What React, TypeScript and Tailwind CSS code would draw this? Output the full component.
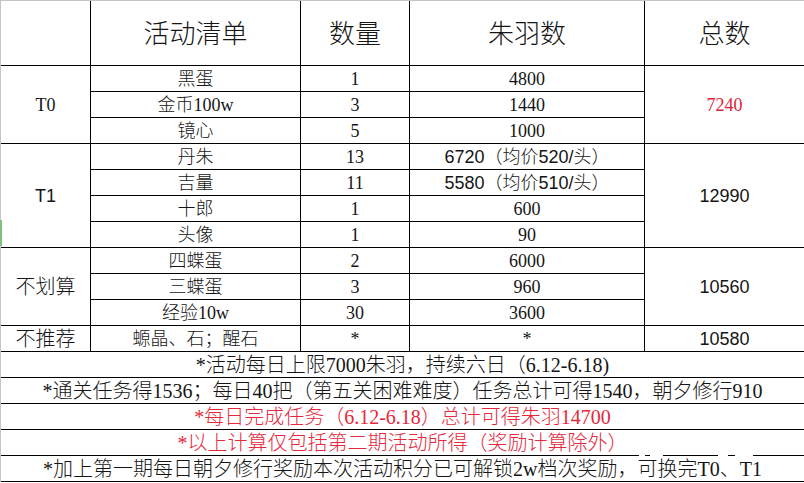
import React from "react";

const serif = "font-['Liberation_Serif','Noto_Sans_CJK_SC',serif]";
const sans = "font-['Liberation_Sans','Noto_Sans_CJK_SC',sans-serif]";

type Row = { name: string; qty: string; amount: string; amountSans?: boolean };

const groups: { label: string; labelSans?: boolean; labelSize: string; total: string; totalRed?: boolean; totalSans?: boolean; rows: Row[] }[] = [
  {
    label: "T0",
    labelSize: "text-[18px]",
    total: "7240",
    totalRed: true,
    rows: [
      { name: "黑蛋", qty: "1", amount: "4800" },
      { name: "金币100w", qty: "3", amount: "1440" },
      { name: "镜心", qty: "5", amount: "1000" },
    ],
  },
  {
    label: "T1",
    labelSans: true,
    labelSize: "text-[18px]",
    total: "12990",
    totalSans: true,
    rows: [
      { name: "丹朱", qty: "13", amount: "6720（均价520/头）", amountSans: true },
      { name: "吉量", qty: "11", amount: "5580（均价510/头）", amountSans: true },
      { name: "十郎", qty: "1", amount: "600" },
      { name: "头像", qty: "1", amount: "90" },
    ],
  },
  {
    label: "不划算",
    labelSize: "text-[20px]",
    total: "10560",
    totalSans: true,
    rows: [
      { name: "四蝶蛋", qty: "2", amount: "6000" },
      { name: "三蝶蛋", qty: "3", amount: "960" },
      { name: "经验10w", qty: "30", amount: "3600" },
    ],
  },
  {
    label: "不推荐",
    labelSize: "text-[20px]",
    total: "10580",
    totalSans: true,
    rows: [{ name: "螈晶、石；醒石", qty: "*", amount: "*" }],
  },
];

const notes: { text: string; red?: boolean }[] = [
  { text: "*活动每日上限7000朱羽，持续六日（6.12-6.18)" },
  { text: "*通关任务得1536；每日40把（第五关困难难度）任务总计可得1540，朝夕修行910" },
  { text: "*每日完成任务（6.12-6.18）总计可得朱羽14700", red: true },
  { text: "*以上计算仅包括第二期活动所得（奖励计算除外）", red: true },
  { text: "*加上第一期每日朝夕修行奖励本次活动积分已可解锁2w档次奖励，可换完T0、T1" },
];

const cell = "flex items-center justify-center border-r border-b border-black leading-none whitespace-nowrap";

export default function App() {
  let rowStart = 2;
  return (
    <div className={`relative w-[804px] h-[483px] overflow-hidden bg-white text-[#151515] font-light ${serif}`}>
      <div className="grid w-[805px] grid-cols-[90px_210px_109px_235px_160px] grid-rows-[65px_repeat(16,26px)] border-t border-l border-[#c4c4c4]">
        {/* header */}
        <div className={cell} />
        <div className={`${cell} text-[26px] pt-1`}>活动清单</div>
        <div className={`${cell} text-[26px] pt-1`}>数量</div>
        <div className={`${cell} text-[26px] pt-1`}>朱羽数</div>
        <div className={`${cell} text-[26px] pt-1`}>总数</div>

        {groups.map((g) => {
          const start = rowStart;
          const span = g.rows.length;
          rowStart += span;
          return (
            <React.Fragment key={g.label}>
              <div
                className={`${cell} col-start-1 ${g.labelSize} ${g.labelSans ? sans : ""}`}
                style={{ gridRow: `${start} / span ${span}` }}
              >
                {g.label}
              </div>
              {g.rows.map((r, i) => (
                <React.Fragment key={r.name}>
                  <div className={`${cell} col-start-2 text-[18px]`} style={{ gridRow: start + i }}>
                    {r.name}
                  </div>
                  <div className={`${cell} col-start-3 text-[18px]`} style={{ gridRow: start + i }}>
                    {r.qty}
                  </div>
                  <div
                    className={`${cell} col-start-4 text-[18px] ${r.amountSans ? sans : ""}`}
                    style={{ gridRow: start + i }}
                  >
                    {r.amount}
                  </div>
                </React.Fragment>
              ))}
              <div
                className={`${cell} col-start-5 text-[18px] ${g.totalSans ? sans : ""} ${g.totalRed ? "text-[#e0223a]" : ""}`}
                style={{ gridRow: `${start} / span ${span}` }}
              >
                {g.total}
              </div>
            </React.Fragment>
          );
        })}

        {notes.map((n) => (
          <div key={n.text} className={`${cell} col-span-5 text-[20px] ${n.red ? "text-[#e5283c]" : ""}`}>
            {n.text}
          </div>
        ))}
      </div>

      {/* scan artefacts */}
      <div className="absolute left-0 top-[220px] w-[2px] h-[26px] bg-[#7fc27f]" />
      <div className="absolute top-[454px] left-[639px] w-[6px] h-[3px] bg-white" />
      <div className="absolute top-[454px] left-[650px] w-[13px] h-[3px] bg-white" />
      <div className="absolute top-[454px] left-[718px] w-[10px] h-[3px] bg-white" />
      <div className="absolute top-[454px] left-[735px] w-[18px] h-[3px] bg-white" />
    </div>
  );
}
